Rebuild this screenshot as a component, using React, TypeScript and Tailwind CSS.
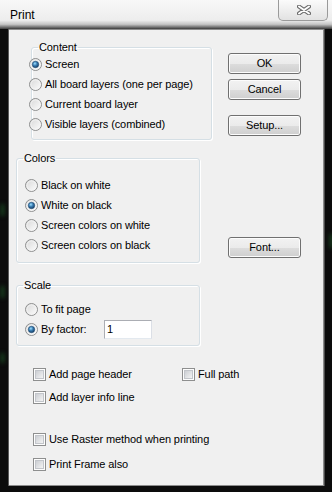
import React from "react";

function Radio({ checked }: { checked?: boolean }) {
  return (
    <svg width="13" height="13" viewBox="0 0 13 13" className="shrink-0">
      <defs>
        <linearGradient id="rfill" x1="0" y1="0" x2="1" y2="1">
          <stop offset="0" stopColor="#d6d6d6" />
          <stop offset="1" stopColor="#ffffff" />
        </linearGradient>
        <radialGradient id="rdot" cx="0.4" cy="0.35" r="0.7">
          <stop offset="0" stopColor="#9fe1ff" />
          <stop offset="0.45" stopColor="#3b7fb5" />
          <stop offset="1" stopColor="#12375c" />
        </radialGradient>
      </defs>
      <circle cx="6.5" cy="6.5" r="6" fill="url(#rfill)" stroke="#8e8f8f" />
      <circle cx="6.5" cy="6.5" r="4.6" fill="none" stroke="#f4f4f4" strokeWidth="0.8" />
      {checked && <circle cx="6.5" cy="6.5" r="3.2" fill="url(#rdot)" stroke="#1d4a73" strokeWidth="0.6" />}
    </svg>
  );
}

function Check() {
  return (
    <svg width="13" height="13" viewBox="0 0 13 13" className="shrink-0">
      <defs>
        <linearGradient id="cfill" x1="0" y1="0" x2="1" y2="1">
          <stop offset="0" stopColor="#c9ccd1" />
          <stop offset="1" stopColor="#f6f6f6" />
        </linearGradient>
      </defs>
      <rect x="0.5" y="0.5" width="12" height="12" fill="#fdfdfd" stroke="#8e8f8f" />
      <rect x="2.5" y="2.5" width="8" height="8" fill="url(#cfill)" stroke="#c2c5ca" />
    </svg>
  );
}

function RadioRow({ label, checked }: { label: string; checked?: boolean }) {
  return (
    <div className="flex h-[20px] items-center gap-[3px] whitespace-nowrap">
      <Radio checked={checked} />
      <span>{label}</span>
    </div>
  );
}

function CheckRow({ label }: { label: string }) {
  return (
    <div className="flex h-[20px] items-center gap-[3px] whitespace-nowrap">
      <Check />
      <span>{label}</span>
    </div>
  );
}

function Button({ label }: { label: string }) {
  return (
    <div className="flex h-[21px] w-[73px] items-center justify-center rounded-[3px] border border-[#707070] bg-[linear-gradient(to_bottom,#f2f2f2_0%,#ebebeb_50%,#dddddd_51%,#cfcfcf_100%)] shadow-[inset_0_0_0_1px_#fcfcfc]">
      {label}
    </div>
  );
}

const groupCls =
  "rounded-[3px] border border-[#d5dfe5] shadow-[inset_1px_1px_0_#fff,1px_1px_0_#fff]";
const legendCls = "ml-[6px] px-[1px] leading-[13px]";

export default function App() {
  return (
    <div className="flex h-[492px] w-[332px] flex-col overflow-hidden bg-[#0c0c0c] font-['Liberation_Sans',Arial,sans-serif] text-[11px] tracking-[-0.1px] text-black">
      <div className="flex h-[29px] shrink-0 items-start bg-[linear-gradient(to_bottom,#f8f8f8_0%,#ededed_70%,#c4c4c4_84%,#3c3c3c_100%)]">
        <span className="ml-[10px] mt-[8px] text-[12px] leading-[14px] tracking-normal">Print</span>
        <div className="ml-auto mr-[4px] flex h-[21px] w-[50px] items-center justify-center rounded-b-[5px] border border-t-0 border-[#9a9a9a] bg-[linear-gradient(to_bottom,#fbfbfb,#e2e2e2)] pl-[2px]">
          <svg width="14" height="10" viewBox="0 0 14 10">
            <path d="M2 1.5 L12 8.5 M12 1.5 L2 8.5" stroke="#6a6a6a" strokeWidth="4" strokeLinecap="round" />
            <path d="M2 1.5 L12 8.5 M12 1.5 L2 8.5" stroke="#ffffff" strokeWidth="2" strokeLinecap="round" />
          </svg>
        </div>
      </div>

      <div className="flex flex-1">
        <div className="flex w-[9px] flex-col border-r border-[#5a5a5a]">
          <div className="ml-[1px] mt-[175px] h-[12px] w-[3px] bg-[#1a4a22] blur-[2px]" />
          <div className="ml-[1px] mt-[70px] h-[12px] w-[3px] bg-[#1a4a22] blur-[2px]" />
          <div className="ml-[1px] mt-[55px] h-[10px] w-[3px] bg-[#1a4a22] blur-[2px]" />
        </div>

        <div className="flex-1 border-b border-r border-t border-[#8c8c8c] bg-[#f0f0f0]">
          <div className="flex items-start">
            <fieldset className={`ml-[22px] mt-[11px] w-[181px] pb-[5px] ${groupCls}`}>
              <legend className={legendCls}>Content</legend>
              <div className="-ml-[3px]">
                <RadioRow label="Screen" checked />
                <RadioRow label="All board layers (one per page)" />
                <RadioRow label="Current board layer" />
                <RadioRow label="Visible layers (combined)" />
              </div>
            </fieldset>
            <div className="ml-[16px] mt-[23px] flex flex-col">
              <Button label="OK" />
              <div className="mt-[5px]">
                <Button label="Cancel" />
              </div>
              <div className="mt-[15px]">
                <Button label="Setup..." />
              </div>
            </div>
          </div>

          <div className="flex items-start">
            <fieldset className={`ml-[7px] mt-[12px] w-[184px] pb-[7px] pt-[10px] ${groupCls}`}>
              <legend className={legendCls}>Colors</legend>
              <div className="ml-[8px]">
                <RadioRow label="Black on white" />
                <RadioRow label="White on black" checked />
                <RadioRow label="Screen colors on white" />
                <RadioRow label="Screen colors on black" />
              </div>
            </fieldset>
            <div className="ml-[28px] mt-[97px]">
              <Button label="Font..." />
            </div>
          </div>

          <fieldset className={`ml-[7px] mt-[16px] w-[184px] pb-[6px] pt-[7px] ${groupCls}`}>
            <legend className={legendCls}>Scale</legend>
            <div className="ml-[8px]">
              <RadioRow label="To fit page" />
              <div className="flex h-[20px] items-center">
                <div className="w-[79px]">
                  <RadioRow label="By factor:" checked />
                </div>
                <div className="flex h-[19px] w-[48px] items-center border border-[#abadb3] border-b-[#e3e9ef] border-r-[#dbdfe6] bg-white pl-[2px]">
                  1
                </div>
              </div>
            </div>
          </fieldset>

          <div className="ml-[24px] mt-[18px] flex">
            <div className="w-[149px]">
              <CheckRow label="Add page header" />
            </div>
            <CheckRow label="Full path" />
          </div>
          <div className="ml-[24px] mt-[3px]">
            <CheckRow label="Add layer info line" />
          </div>
          <div className="ml-[24px] mt-[22px]">
            <CheckRow label="Use Raster method when printing" />
          </div>
          <div className="ml-[24px] mt-[5px]">
            <CheckRow label="Print Frame also" />
          </div>
        </div>

        <div className="flex w-[8px] flex-col border-l border-[#4a4a4a]">
          <div className="ml-[5px] mt-[205px] h-[14px] w-[3px] bg-[#1a4a22] blur-[2px]" />
        </div>
      </div>
      <div className="h-[6px] shrink-0" />
    </div>
  );
}
